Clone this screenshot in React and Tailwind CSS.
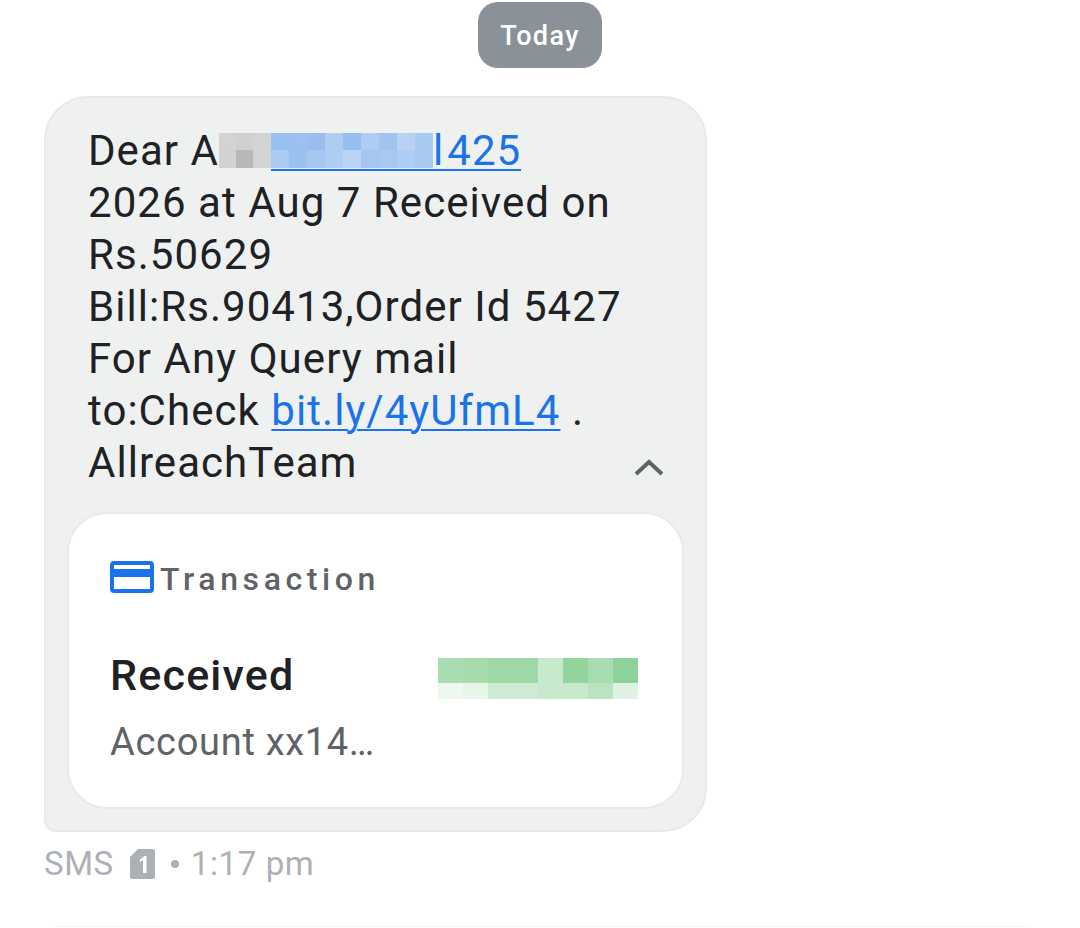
const grayCells = ['#d3d3d3','#d0d0d0','#d2d3d2','#d2d2d2','#b8b8b8','#d2d3d2'];
const blueCells = [
  '#99bfee','#9cc0ef','#98bdee','#aecdf1','#98bdee','#afcdf2','#a0c3ef','#b9d2f3','#a8c9f1',
  '#a9caf1','#9ac0ee','#a6c7f0','#aecdf2','#bbd3f4','#a5c6f0','#a7c8f0','#aecdf2','#a9c9f1',
];
const greenTop = ['#a9dcb0','#a5dbad','#9dd8a6','#9dd8a6','#c7e9cc','#93d49d','#a8dcb0','#8dd298'];
const greenBottom = ['#eef8ef','#e7f5e9','#cdebd2','#cdebd2','#c8e9cd','#c8e9cd','#bae4c1','#dff2e2'];

function Pixelated() {
  return (
    <span className="grid grid-cols-[17px_17px_18px] grid-rows-[17px_18px] mt-[8px] h-[35px] shrink-0">
      {grayCells.map((c, i) => <span key={i} style={{ backgroundColor: c }} />)}
    </span>
  );
}

function PixelatedLink() {
  return (
    <span className="grid grid-cols-[repeat(9,18px)] grid-rows-[17px_18px] mt-[8px] h-[35px] shrink-0">
      {blueCells.map((c, i) => <span key={i} style={{ backgroundColor: c }} />)}
    </span>
  );
}

function CardIcon() {
  return (
    <svg width="44" height="32" viewBox="0 0 44 32" className="block mb-[4px]">
      <rect width="44" height="32" rx="4" fill="#1a73e8" />
      <rect x="4" y="4" width="36" height="4" fill="#ffffff" />
      <rect x="4" y="16" width="36" height="12" fill="#ffffff" />
    </svg>
  );
}

function SimIcon() {
  return (
    <svg width="25" height="30" viewBox="0 0 25 30" className="block">
      <path d="M8 0H22.5A2.5 2.5 0 0 1 25 2.5V27.5A2.5 2.5 0 0 1 22.5 30H2.5A2.5 2.5 0 0 1 0 27.5V8Z" fill="#adb0b5" />
      <path d="M10 10.5L14.5 7H16.5V24H13V11L10 13.5Z" fill="#ffffff" />
    </svg>
  );
}

export default function App() {
  return (
    <div className="relative w-[1080px] h-[928px] overflow-hidden bg-white font-['Roboto',sans-serif]">
      <div className="flex justify-center pt-[2px]">
        <div className="w-[124px] h-[66px] pt-[3px] rounded-[20px] bg-[#8b9199] flex items-center justify-center text-white text-[27px] font-medium tracking-[1.4px]">
          Today
        </div>
      </div>

      <div className="ml-[44px] mt-[28px] w-[663px] h-[736px] flex flex-col border-2 border-[#e7e9e9] bg-[#eff1f1] rounded-tl-[44px] rounded-tr-[44px] rounded-br-[44px] rounded-bl-[12px]">
        <div className="relative pl-[43px] pt-[27px] h-[414px] text-[42px] leading-[52px] tracking-[1.05px] text-[#202124] whitespace-nowrap">
          <div className="flex h-[52px] -ml-[1px]">
            <span>Dear A</span>
            <Pixelated />
            <span className="flex h-[46px] border-b-2 border-[#1a73e8] text-[#1a73e8]">
              <PixelatedLink />
              <span>l</span>
              <span className="ml-[3px]">425</span>
            </span>
          </div>
          <div className="-ml-[1px]">2026 at Aug 7 Received on</div>
          <div className="-ml-[1px]">Rs.50629</div>
          <div className="-ml-[1px]">Bill:Rs.90413,Order Id 5427</div>
          <div className="-ml-[1px]">For Any Query mail</div>
          <div className="-ml-[1px]">
            to:Check <span className="text-[#1a73e8] underline decoration-2 underline-offset-[4px]">bit.ly/4yUfmL4</span> .
          </div>
          <div className="-ml-[1px]">AllreachTeam</div>
          <svg width="30" height="18" viewBox="0 0 30 18" className="absolute right-[41px] top-[360px]">
            <path d="M2 16L15 4L28 16" fill="none" stroke="#5f6368" strokeWidth="4" />
          </svg>
        </div>

        <div className="mx-[21px] w-[617px] h-[297px] flex flex-col bg-white border-2 border-[#e8eaea] rounded-[40px] pl-[41px] pr-[44px]">
          <div className="flex items-center gap-[6px] mt-[45px] h-[40px]">
            <CardIcon />
            <span className="text-[32px] font-medium tracking-[4.6px] text-[#5f6368]">Transaction</span>
          </div>
          <div className="flex items-center justify-between mt-[50px]">
            <span className="text-[43px] leading-[52px] font-medium tracking-[1.2px] text-[#202124]">Received</span>
            <div className="flex flex-col mt-[6px]">
              <div className="flex">
                {greenTop.map((c, i) => <span key={i} className="w-[25px] h-[25px]" style={{ backgroundColor: c }} />)}
              </div>
              <div className="flex">
                {greenBottom.map((c, i) => <span key={i} className="w-[25px] h-[16px]" style={{ backgroundColor: c }} />)}
              </div>
            </div>
          </div>
          <div className="mt-[17px] text-[38px] leading-[48px] tracking-[0.7px] text-[#5f6368]">Account xx14…</div>
        </div>
      </div>

      <div className="ml-[44px] mt-[12px] flex items-center text-[33px] leading-[40px] tracking-[0.6px] text-[#adb0b5] whitespace-nowrap">
        <span>SMS</span>
        <span className="ml-[16px]"><SimIcon /></span>
        <span className="ml-[16px] w-[8px] h-[8px] rounded-full bg-[#adb0b5]" />
        <span className="ml-[12px]">1:17 pm</span>
      </div>

      <div className="ml-[52px] mt-[42px] w-[979px] h-[1px] bg-[#f6f6f6]" />
    </div>
  );
}
